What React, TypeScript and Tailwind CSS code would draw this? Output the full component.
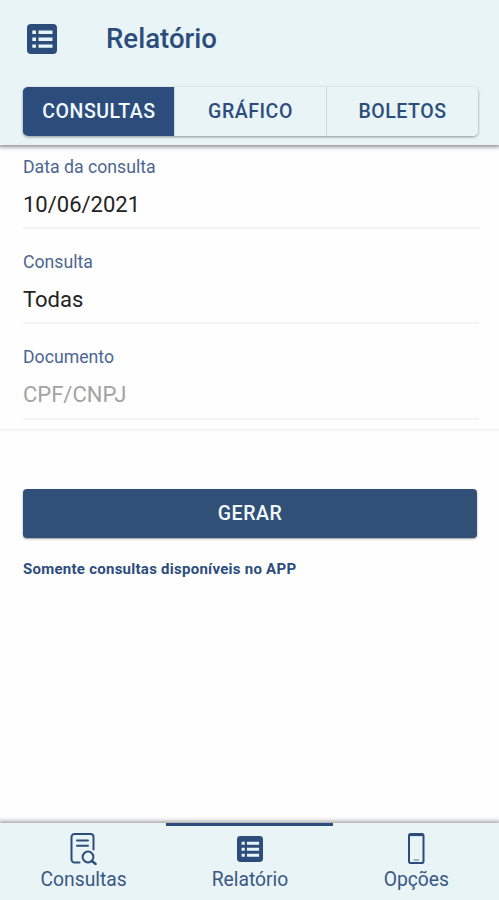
import React, { useState } from "react";

const ListIcon: React.FC<{ className?: string }> = ({ className }) => (
  <svg className={className} viewBox="0 0 30 30" fill="none">
    <rect width="30" height="30" rx="4" fill="#2c4d7c" />
    <path
      d="M5.300 8.300h3.700M5.300 15.200h3.700M5.300 22.100h3.700M11.500 8.300h14M11.500 15.200h14M11.500 22.100h14"
      stroke="#e8f4f6"
      strokeWidth="3.400"
    />
  </svg>
);

const SearchDocIcon: React.FC = () => (
  <svg
    className="h-8 w-7"
    viewBox="0 0 28 32"
    fill="none"
    stroke="#2c4d7c"
    strokeWidth="2"
    strokeLinecap="round"
  >
    <path d="M9.500 29.500H4.500a3 3 0 0 1-3-3V4a3 3 0 0 1 3-3h16a3 3 0 0 1 3 3V16.500" />
    <path d="M7 7.500h11M7 12.800h11" />
    <circle cx="18" cy="24" r="5.400" />
    <path d="M22 28l3.600 3" strokeWidth="2.400" />
  </svg>
);

const PhoneIcon: React.FC = () => (
  <svg className="h-8 w-[18px]" viewBox="0 0 18 32" fill="none">
    <rect x="2" y="1" width="14.500" height="29" rx="1.800" stroke="#2c4d7c" strokeWidth="2" />
    <path d="M2.500 1.800h13.500" stroke="#2c4d7c" strokeWidth="2.600" />
    <path d="M6.500 27h5.500" stroke="#2c4d7c" strokeOpacity="0.5" strokeWidth="1.500" />
  </svg>
);

const segments = ["CONSULTAS", "GRÁFICO", "BOLETOS"];

const tabs = [
  { label: "Consultas", icon: <SearchDocIcon /> },
  { label: "Relatório", icon: <ListIcon className="h-[26px] w-[26px]" /> },
  { label: "Opções", icon: <PhoneIcon /> },
];

const App: React.FC = () => {
  const [segment, setSegment] = useState("CONSULTAS");
  const [tab, setTab] = useState("Relatório");
  const [documento, setDocumento] = useState("");

  return (
    <div className="flex h-[900px] w-[499px] flex-col overflow-hidden bg-[#fefefe] font-['Roboto',sans-serif] text-[#2c4d7c]">
      <header className="relative h-[145px] shrink-0 bg-[#e8f4f6] shadow-[0_1px_4px_1px_rgba(0,0,0,0.45)]">
        <div className="flex h-[78px] items-center pl-[27px]">
          <ListIcon className="h-[30px] w-[30px]" />
          <h1 className="ml-[49px] text-[27.6px] font-medium leading-none">Relatório</h1>
        </div>

        <div className="ml-[23px] mt-[9px] grid h-[49px] w-[455px] grid-cols-[151px_152px_152px] overflow-hidden rounded-[5px] shadow-[0_1px_3px_rgba(0,0,0,0.4)]">
          {segments.map((item) => (
            <button
              key={item}
              type="button"
              onClick={() => setSegment(item)}
              className={`border-l text-[19.5px] font-medium tracking-[0.55px] ${
                segment === item
                  ? "border-[#2c4d7c] bg-[#2c4d7c] text-[#f2fafc]"
                  : "border-[#ccd9de] bg-[#e8f4f6]"
              }`}
            >
              {item}
            </button>
          ))}
        </div>
      </header>

      {/* Filters */}
      <main className="flex-1">
        <div className="h-[286px] border-b-2 border-[#f4f4f5] pl-[23px] pr-5 text-[22px] text-[#232323]">
          <div className="h-[84px] border-b-2 border-[#f4f4f5] pt-2.5">
            <p className="h-[26px] text-[17.7px] leading-6 text-[#4c6690]">Data da consulta</p>
            <p className="mt-2 leading-8">10/06/2021</p>
          </div>
          <div className="h-[95px] border-b-2 border-[#f4f4f5] pt-[21px]">
            <p className="h-[26px] text-[17.7px] leading-6 text-[#4c6690]">Consulta</p>
            <p className="mt-2 leading-8">Todas</p>
          </div>
          <div className="h-[96px] border-b-2 border-[#f4f4f5] pt-[21px]">
            <label htmlFor="documento" className="block h-[26px] text-[17.7px] leading-6 text-[#4c6690]">
              Documento
            </label>
            <input
              id="documento"
              value={documento}
              onChange={(e) => setDocumento(e.target.value)}
              placeholder="CPF/CNPJ"
              className="mt-[7px] block h-8 w-full bg-transparent outline-none placeholder:text-[#a3a3a3]"
            />
          </div>
        </div>

        <div className="px-[23px] pt-[58px]">
          <button
            type="button"
            className="block h-[49px] w-[454px] rounded-[4px] bg-[#315078] text-[19.5px] font-medium tracking-[0.55px] text-[#f2fafc] shadow-[0_1px_2px_rgba(0,0,0,0.4)]"
          >
            GERAR
          </button>
          <p className="mt-[19px] text-[15px] font-bold leading-6 tracking-[0.26px]">
            Somente consultas disponíveis no APP
          </p>
        </div>
      </main>

      {/* Bottom tabs */}
      <nav className="relative grid h-[77px] shrink-0 grid-cols-3 bg-[#e8f4f6] shadow-[0_-1px_4px_1px_rgba(0,0,0,0.35)]">
        {tabs.map(({ label, icon }) => (
          <button
            key={label}
            type="button"
            onClick={() => setTab(label)}
            className={`flex flex-col items-center border-t-[3px] pl-px pt-[7px] text-[19.3px] leading-[30px] text-[#3b5885] ${
              tab === label ? "border-[#2c4d7c]" : "border-transparent"
            }`}
          >
            <span className="flex h-8 items-center">{icon}</span>
            {label}
          </button>
        ))}
      </nav>
    </div>
  );
};

export default App;
